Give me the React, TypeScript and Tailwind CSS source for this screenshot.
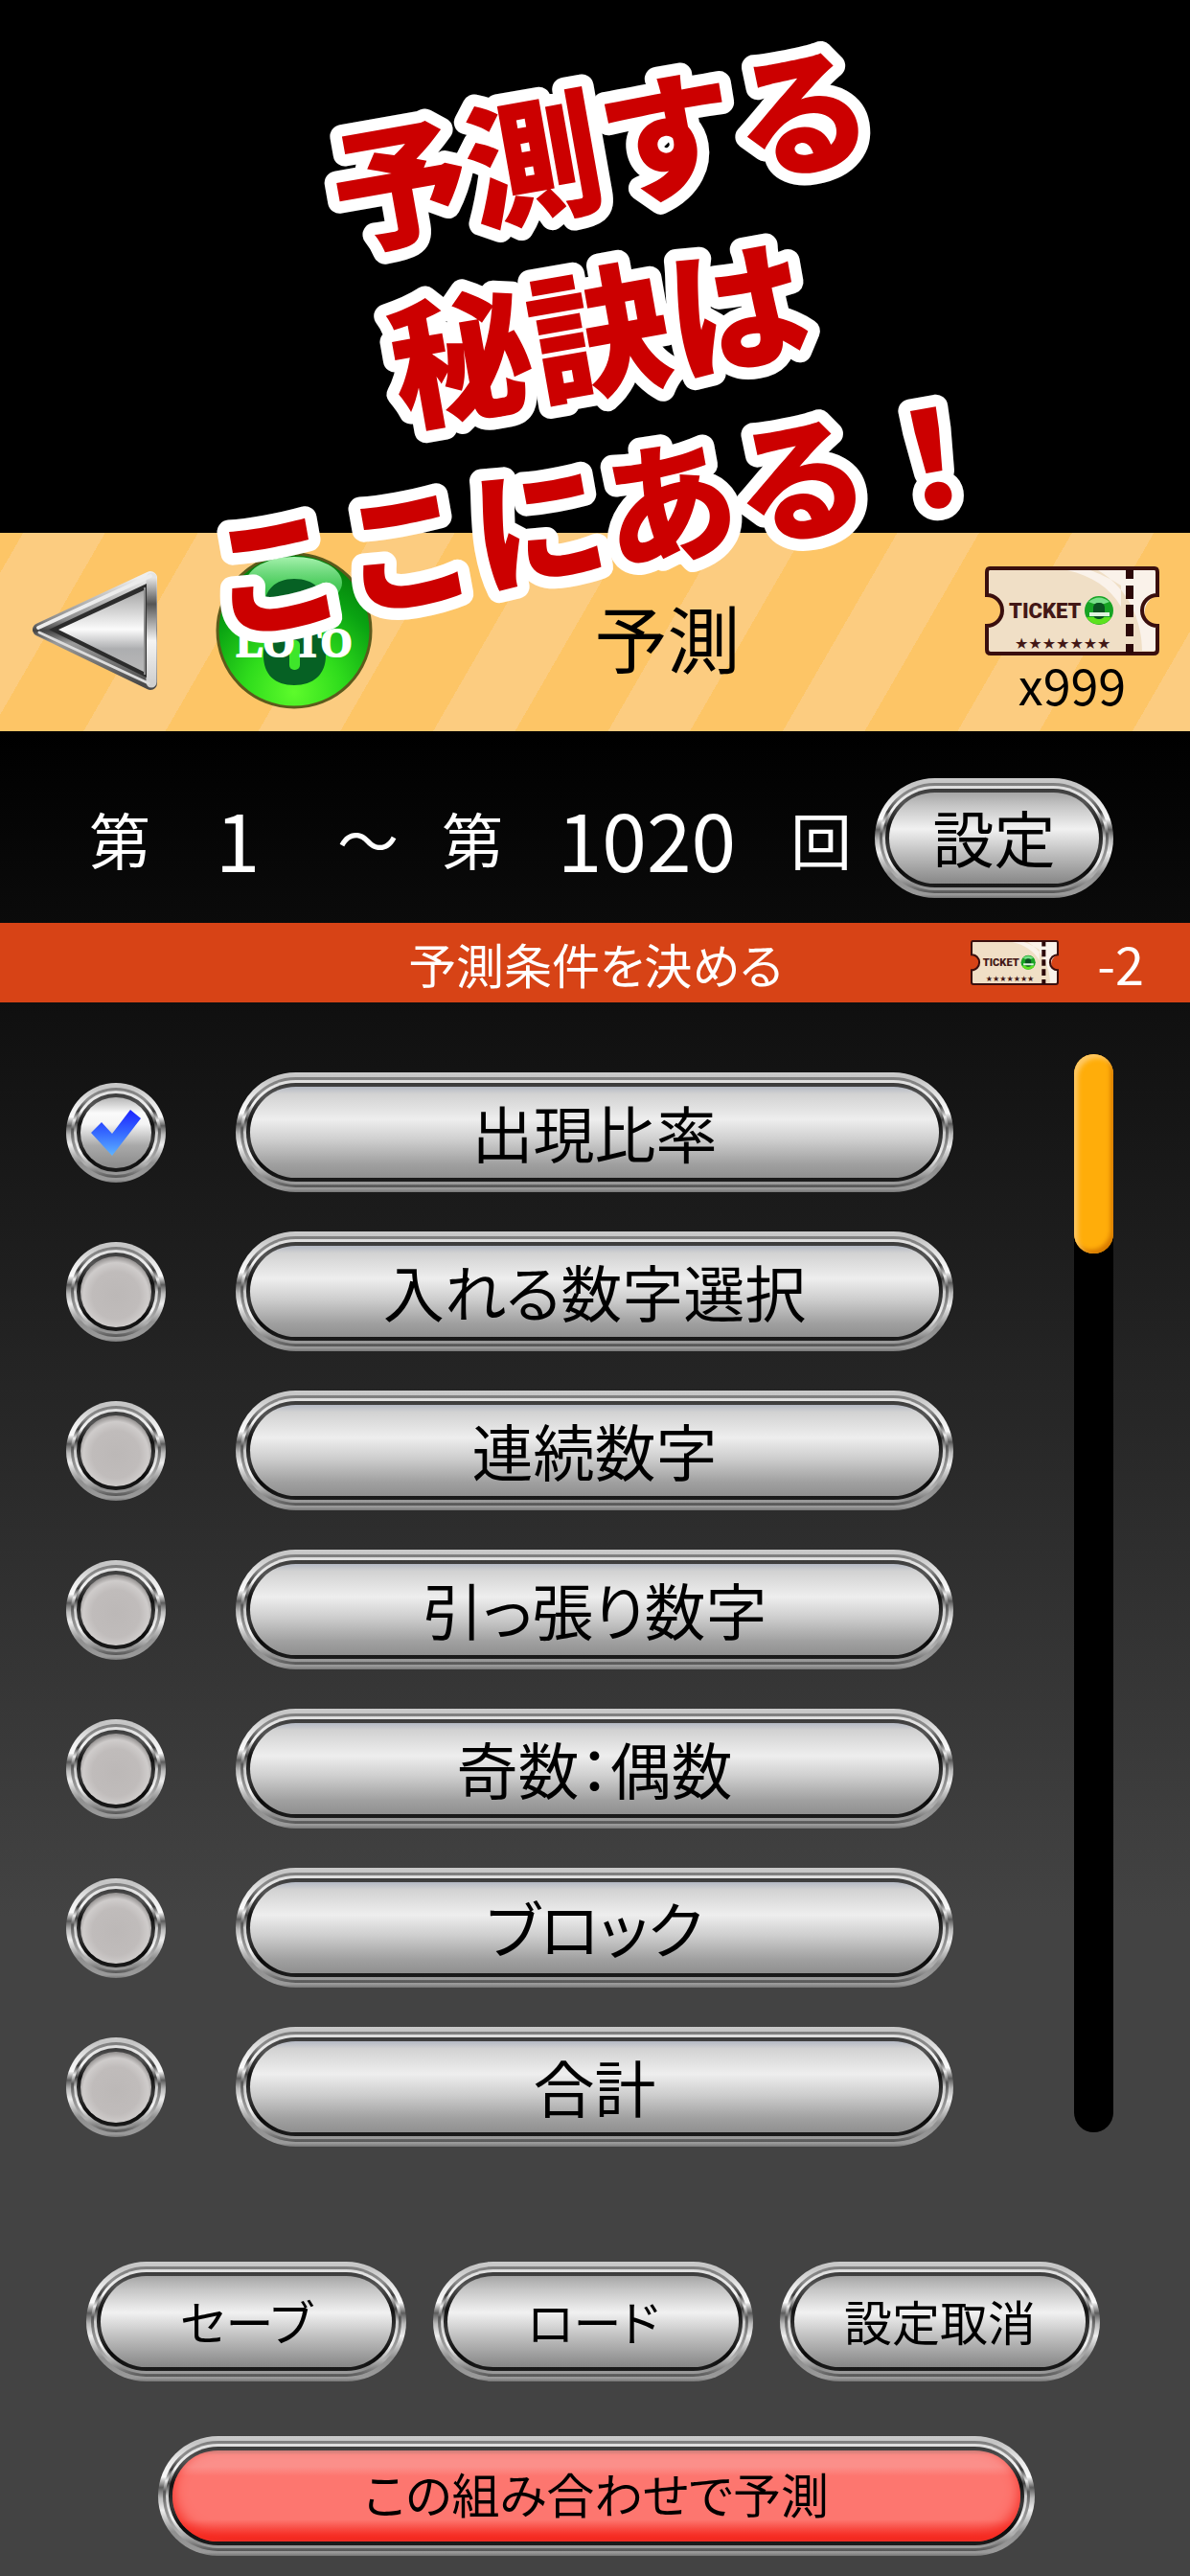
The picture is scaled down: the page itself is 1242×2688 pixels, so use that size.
import React, { ReactNode, useState } from "react"

type ConditionType = {
    id: string
    name: string
}

const conditions: ConditionType[] = [
    { id: "ratio", name: "出現比率" },
    { id: "include", name: "入れる数字選択" },
    { id: "sequence", name: "連続数字" },
    { id: "carry", name: "引っ張り数字" },
    { id: "parity", name: "奇数：偶数" },
    { id: "block", name: "ブロック" },
    { id: "total", name: "合計" }
]

const faces = {
    silver: "pb-1 bg-[linear-gradient(#b4b9c4_0,#d2d2d2_8%,#eeeeee_36%,#cfcfcf_58%,#a0a0a0_85%,#909090_100%)]",
    steel: "pb-1 bg-[linear-gradient(#a6a6a6_0,#c6c6c6_15%,#f1f1f1_40%,#bdbdbd_68%,#878787_100%)]",
    red: "pb-2 bg-[linear-gradient(#c58f8b_0,#fb8f8a_5%,#fb8f8a_18%,#fd766f_28%,#fd766f_76%,#f52b22_96%,#d8322b_100%)] shadow-[inset_0_-6px_14px_#f52b22]",
    off: "bg-[radial-gradient(circle_at_50%_55%,#bcb8b7_0,#c0bcbb_45%,#cfcccb_62%,#9a9796_72%)]",
    on: "bg-[linear-gradient(#b5b5b5_0,#fafafa_22%,#f4f4f4_38%,#a9a9a9_68%,#8a8a8a_100%)]"
}

type metalProps = {
    face: keyof typeof faces
    children?: ReactNode
}

// Chrome frame made of four rings around a coloured face
const Metal = ({ face, children }: metalProps) => (
    <span className="flex h-full w-full rounded-full p-[5px] bg-[linear-gradient(#cbcbcb_0,#c4c4c4_5%,#e8e8e8_20%,#fafafa_34%,#5c5c5c_43%,#bcbcbc_52%,#ededed_62%,#8f8f8f_80%,#9a9a9a_97%,#777777_100%)]">
        <span className="flex flex-1 rounded-full p-[3px] bg-[linear-gradient(#7e7e7e_0,#8d8d8d_14%,#3c3c3c_26%,#ececec_36%,#555555_46%,#8a8a8a_60%,#b0b0b0_85%,#555555_100%)]">
            <span className="flex flex-1 rounded-full p-[3px] bg-[linear-gradient(#dddddd_0,#f4f4f4_24%,#444444_38%,#cccccc_50%,#f2f2f2_72%,#8e8e8e_94%,#9c9c9c_100%)]">
                <span className="flex flex-1 rounded-full p-[4px] bg-[linear-gradient(#3a3a3a_0,#555555_14%,#111111_38%,#3a3a3a_60%,#0a0a0a_82%,#1c1c1c_100%)]">
                    <span className={`flex flex-1 items-center justify-center rounded-full ${faces[face]}`}>
                        {children}
                    </span>
                </span>
            </span>
        </span>
    </span>
)

// Tilted catch copy, red letters on a rounded white outline
const CatchCopy = () => (
    <svg
        viewBox="0 0 1242 690"
        className="w-full [font-feature-settings:normal]"
        fontFamily="'Noto Sans CJK JP', sans-serif"
        fontWeight="900"
        textAnchor="middle"
        fill="#cc0000"
        stroke="#ffffff"
        strokeWidth="25"
        strokeLinejoin="round"
        paintOrder="stroke"
    >
        <text transform="translate(627 155) rotate(-10)" y="54" fontSize="142">予測する</text>
        <text transform="translate(625 348) rotate(-10)" y="55" fontSize="146">秘訣は</text>
        <text transform="translate(630 537) rotate(-10)" y="53" fontSize="139">ここにある！</text>
    </svg>
)

const Ticket = ({ className }: { className: string }) => (
    <svg viewBox="0 0 182 93" className={className} role="img" aria-label="チケット">
        <path
            d="M5 2H177Q180 2 180 6V30A16 16 0 0 0 180 62V87Q180 91 176 91H6Q2 91 2 87V62A16 16 0 0 0 2 30V6Q2 2 5 2Z"
            fill="#f0dfc6"
        />
        <path d="M86 4C112 10 130 22 142 42V20C130 12 118 7 110 4ZM118 4H178V30C168 36 164 46 168 58L178 64V88H164C164 60 152 24 118 4Z" fill="#faf2ea" />
        <path
            d="M5 2H177Q180 2 180 6V30A16 16 0 0 0 180 62V87Q180 91 176 91H6Q2 91 2 87V62A16 16 0 0 0 2 30V6Q2 2 5 2Z"
            fill="none"
            stroke="#3a0f0e"
            strokeWidth="4"
        />
        <path d="M151 3V13M151 20V34M151 40V53M151 60V73M151 81V91" stroke="#2c0808" strokeWidth="8" />
        <text x="25" y="54" fontFamily="Roboto, sans-serif" fontWeight="900" fontSize="22" fill="#431816">TICKET</text>
        <circle cx="119" cy="46" r="15" fill="#17a324" />
        <path d="M106 53A15 15 0 0 0 132 53Z" fill="#5de21f" />
        <path d="M108 37Q119 28 130 37Q119 42 108 37Z" fill="#79e08a" />
        <rect x="113" y="38" width="12" height="17" rx="5" fill="#0a5120" />
        <rect x="109" y="48" width="21" height="4" fill="#dff3df" />
        <text x="31" y="86" fontFamily="DejaVu Sans, sans-serif" fontSize="16" fill="#431816">★★★★★★★</text>
    </svg>
)

const LotoBall = () => (
    <svg viewBox="0 0 164 164" className="w-[164px] h-[164px]" role="img" aria-label="LOTO 8">
        <defs>
            <radialGradient id="ball" cx="50%" cy="90%" r="90%">
                <stop offset="0" stopColor="#5dfb2b" />
                <stop offset="0.35" stopColor="#2fdc1c" />
                <stop offset="0.7" stopColor="#0aa312" />
                <stop offset="1" stopColor="#037a0c" />
            </radialGradient>
            <linearGradient id="gloss" x1="0" y1="0" x2="0" y2="1">
                <stop offset="0" stopColor="#a6f2ae" />
                <stop offset="1" stopColor="#3ede5e" stopOpacity="0.4" />
            </linearGradient>
        </defs>
        <circle cx="82" cy="82" r="80" fill="url(#ball)" stroke="#5c5a1c" strokeWidth="3" />
        <ellipse cx="82" cy="32" rx="50" ry="27" fill="url(#gloss)" />
        <path
            d="M82 28C103 28 114 40 114 57C114 70 108 78 100 82C110 87 115 95 115 108C115 128 102 139 82 139C62 139 50 128 50 108C50 95 55 87 64 82C56 78 51 70 51 57C51 40 62 28 82 28Z"
            fill="#066124"
        />
        <rect x="77" y="45" width="11" height="28" rx="5" fill="#2fdc30" />
        <rect x="77" y="92" width="11" height="31" rx="5" fill="#3ee62a" />
        <text
            x="82"
            y="109"
            textAnchor="middle"
            fontFamily="Liberation Serif, serif"
            fontWeight="700"
            fontSize="42"
            fill="#fff"
            stroke="#fff"
            strokeWidth="2"
        >
            LOTO
        </text>
    </svg>
)

const BackArrow = () => (
    <svg viewBox="0 0 134 126" className="w-[134px] h-[126px]" aria-hidden="true">
        <defs>
            <linearGradient id="arrowEdge" x1="0" y1="0" x2="0" y2="1">
                <stop offset="0" stopColor="#eeeeee" />
                <stop offset="0.4" stopColor="#8a8a8a" />
                <stop offset="0.5" stopColor="#444444" />
                <stop offset="0.62" stopColor="#9b9b9b" />
                <stop offset="1" stopColor="#4a4a4a" />
            </linearGradient>
            <linearGradient id="arrowFace" x1="0" y1="0" x2="0" y2="1">
                <stop offset="0" stopColor="#a6a6a6" />
                <stop offset="0.48" stopColor="#fbfbfb" />
                <stop offset="0.72" stopColor="#adaeb0" />
                <stop offset="1" stopColor="#b8b8b8" />
            </linearGradient>
            <linearGradient id="arrowSide" gradientUnits="userSpaceOnUse" x1="125" y1="8" x2="125" y2="117">
                <stop offset="0" stopColor="#e4e4e4" />
                <stop offset="0.25" stopColor="#555555" />
                <stop offset="0.6" stopColor="#f4f4f4" />
                <stop offset="1" stopColor="#d0d0d0" />
            </linearGradient>
        </defs>
        <path d="M8 62L124 8V118Z" fill="url(#arrowEdge)" stroke="url(#arrowEdge)" strokeWidth="14" strokeLinejoin="round" />
        <path d="M125 8V117" stroke="url(#arrowSide)" strokeWidth="11" strokeLinecap="round" />
        <path d="M7 60L124 6" stroke="#ececec" strokeWidth="4" strokeLinecap="round" />
        <path d="M8 65L122 118" stroke="#dcdcdc" strokeWidth="3" strokeLinecap="round" />
        <path d="M18 62L120 14V112Z" fill="#2c2c2c" />
        <path d="M28 62L117 21V106Z" fill="url(#arrowFace)" />
        <path d="M118 18V109" stroke="#8d8d8d" strokeWidth="2" />
    </svg>
)

const CheckMark = () => (
    <svg viewBox="0 0 52 50" className="w-[52px] h-[50px]" aria-hidden="true">
        <defs>
            <linearGradient id="tick" x1="0" y1="0" x2="0" y2="1">
                <stop offset="0" stopColor="#1d22ff" />
                <stop offset="0.5" stopColor="#3568ff" />
                <stop offset="1" stopColor="#5fb4ff" />
            </linearGradient>
        </defs>
        <path d="M0 25L11 14L22 26L41 1L52 10L22 49Z" fill="url(#tick)" />
    </svg>
)

const App = () => {
    const [selected, setSelected] = useState<string[]>(["ratio"])

    const toggle = (id: string) => {
        setSelected(selected.includes(id) ? selected.filter(item => item !== id) : [...selected, id])
    }

    return (
        <div className="min-h-screen bg-[#434343] font-['Noto_Sans_CJK_JP',sans-serif] [font-feature-settings:'palt'] leading-none">
            {/* Catch copy, hangs over the header */}
            <div className="relative z-10 h-[556px] bg-black">
                <h1 className="pointer-events-none">
                    <CatchCopy />
                </h1>
            </div>

            {/* Header */}
            <header className="flex items-center h-[207px] pb-1 pl-[33px] pr-8 bg-[repeating-linear-gradient(120deg,#fdc566_0_21px,#fccc80_21px_95px,#fdc566_95px_158px)]">
                <button type="button" aria-label="戻る">
                    <BackArrow />
                </button>
                <div className="ml-[58px]">
                    <LotoBall />
                </div>
                <h2 className="flex-1 pr-6 pt-3 text-center text-[76px]">予測</h2>
                <div className="flex flex-col items-center gap-1 pt-4">
                    <Ticket className="w-[182px] h-[93px]" />
                    <span className="text-[52px]">x999</span>
                </div>
            </header>

            <main className="bg-[linear-gradient(#000000_0,#434343_1237px)]">
                {/* Draw range */}
                <div className="flex items-center h-[200px] pt-[23px] pb-[1px] pl-[93px] pr-20 text-white text-[64px]">
                    <span className="w-16">第</span>
                    <span className="w-[182px] text-center text-[84px]">1</span>
                    <span className="w-[90px] text-center">〜</span>
                    <span className="w-16 ml-8">第</span>
                    <span className="flex-1 text-center text-[84px]">1020</span>
                    <span className="w-16">回</span>
                    <button type="button" className="w-[249px] h-[125px] ml-6 text-black">
                        <Metal face="steel">設定</Metal>
                    </button>
                </div>

                {/* Section title */}
                <div className="flex items-center h-[83px] px-12 bg-[#d74316] text-white">
                    <h3 className="flex-1 pl-[182px] text-center text-[50px]">予測条件を決める</h3>
                    <Ticket className="w-[92px] h-[47px]" />
                    <span className="w-[89px] text-right text-[54px]">-2</span>
                </div>

                {/* Condition list */}
                <div className="flex pt-[54px] pl-[69px] pr-20">
                    <ul className="flex-1 flex flex-col gap-[41px] pt-[19px]">
                        {conditions.map(item => (
                            <li key={item.id} className="flex items-center gap-[73px]">
                                <label className="relative w-[104px] h-[104px]">
                                    <input
                                        type="checkbox"
                                        aria-label={item.name}
                                        checked={selected.includes(item.id)}
                                        onChange={() => toggle(item.id)}
                                        className="absolute inset-0 appearance-none"
                                    />
                                    <Metal face={selected.includes(item.id) ? "on" : "off"}>
                                        {selected.includes(item.id) && <CheckMark />}
                                    </Metal>
                                </label>
                                <button type="button" className="flex-1 h-[125px] text-[64px]">
                                    <Metal face="silver">{item.name}</Metal>
                                </button>
                            </li>
                        ))}
                    </ul>
                    <div className="w-[41px] h-[1125px] ml-[126px] rounded-full bg-black">
                        <div className="h-[208px] rounded-full bg-[#ffad0a] shadow-[inset_4px_4px_5px_#ffc966,inset_-3px_-4px_4px_#d87b00]"></div>
                    </div>
                </div>

                {/* Actions */}
                <div className="flex justify-between pt-[120px] pl-[90px] pr-[94px] gap-7 text-[50px]">
                    <button type="button" className="flex-1 h-[125px]">
                        <Metal face="steel">セーブ</Metal>
                    </button>
                    <button type="button" className="flex-1 h-[125px]">
                        <Metal face="steel">ロード</Metal>
                    </button>
                    <button type="button" className="flex-1 h-[125px]">
                        <Metal face="steel">設定取消</Metal>
                    </button>
                </div>
                <div className="flex pt-[57px] pb-[21px] pl-[165px] pr-[162px]">
                    <button type="button" className="flex-1 h-[125px] text-[50px]">
                        <Metal face="red">この組み合わせで予測</Metal>
                    </button>
                </div>
            </main>
        </div>
    )
}

export default App
